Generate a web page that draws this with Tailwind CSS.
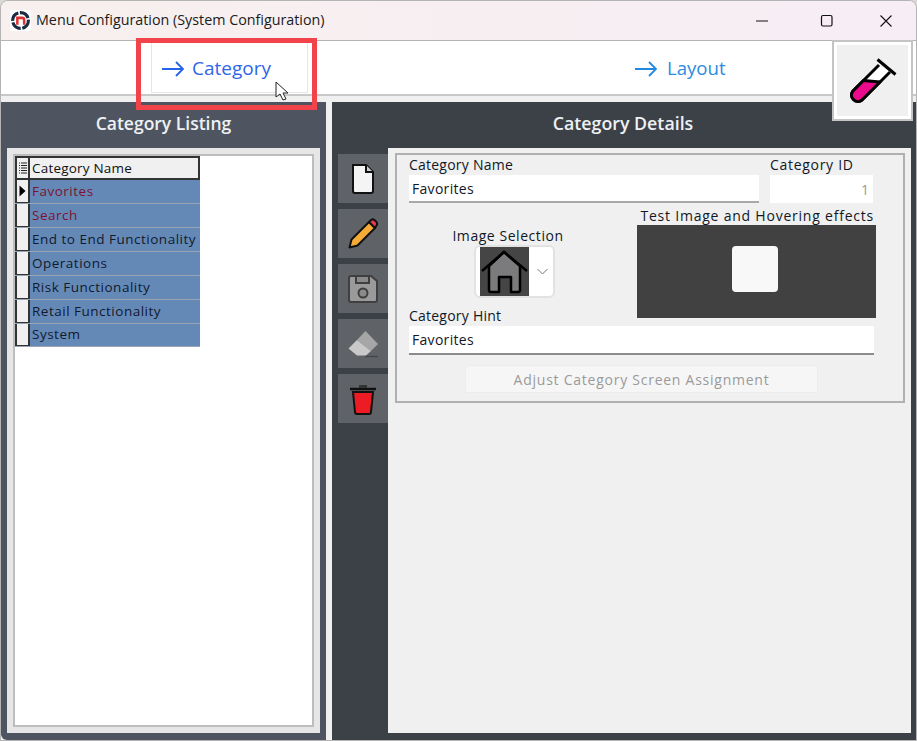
<!DOCTYPE html>
<html lang="en">
<head>
  <meta charset="UTF-8" />
  <title>Menu Configuration</title>
  <script src="https://cdn.jsdelivr.net/npm/@tailwindcss/browser@4"></script>
</head>
<body class="bg-[#d9d9d9]">
  <div class="relative w-[917px] h-[741px] overflow-hidden flex flex-col bg-[#f0f0f0] rounded-t-[8px] border border-[#b4b4b4] font-['Open_Sans',sans-serif] box-border">

    <!-- title bar -->
    <header class="h-[40px] shrink-0 flex items-center bg-gradient-to-r from-[#f7f0ee] to-[#f7edf5] border-b border-[#b4b4b4]">
      <svg class="ml-[9px] w-[21px] h-[21px] bg-white" viewBox="0 0 20 20">
        <circle cx="10" cy="10" r="7.5" fill="none" stroke="#1c2b44" stroke-width="3" stroke-dasharray="10 1.5" />
        <path d="M7 14V7.500h4.500a2 2 0 0 1 2 2V14" fill="none" stroke="#e0312e" stroke-width="2.400" />
      </svg>
      <span class="ml-[5px] text-[14.3px] leading-none text-[#1a1a1a]">Menu Configuration (System Configuration)</span>
      <div class="ml-auto flex items-center">
        <svg class="w-[14px] h-[14px] mr-[51px]" viewBox="0 0 14 14"><path d="M1 7h12" stroke="#111" stroke-width="1" /></svg>
        <svg class="w-[14px] h-[14px] mr-[45px]" viewBox="0 0 14 14"><rect x="1.500" y="1.500" width="10.500" height="10.500" rx="1.500" fill="none" stroke="#111" stroke-width="1.200" /></svg>
        <svg class="w-[14px] h-[14px] mr-[23px]" viewBox="0 0 14 14"><path d="M1.500 1.500l11 11M12.500 1.500l-11 11" stroke="#111" stroke-width="1.100" /></svg>
      </div>
    </header>

    <!-- tab row -->
    <nav class="h-[55px] shrink-0 flex bg-white border-b-2 border-[#c8c8c8]">
      <div class="ml-[150px] w-[157px] h-[52px] flex items-center border-l border-r border-b border-[#e6e6e6] pl-[9px] pt-[4px] gap-[7px]">
        <svg class="w-[24px] h-[16px]" viewBox="0 0 24 16"><path d="M1 8h21M15 1l7 7-7 7" fill="none" stroke="#2463eb" stroke-width="1.800" /></svg>
        <span class="text-[19px] leading-none text-[#2f66e8]">Category</span>
      </div>
      <div class="ml-[326px] h-[52px] flex items-center pt-[3px] gap-[9px]">
        <svg class="w-[24px] h-[16px]" viewBox="0 0 24 16"><path d="M1 8h21M15 1l7 7-7 7" fill="none" stroke="#2189e0" stroke-width="1.800" /></svg>
        <span class="text-[18.6px] leading-none text-[#2b8ce0]">Layout</span>
      </div>
    </nav>

    <!-- panels -->
    <main class="flex-1 flex gap-[6px] pt-[6px] min-h-0">
      <section class="w-[325px] shrink-0 flex flex-col bg-[#4e5560] rounded-bl-[6px] pb-[7px]">
        <h2 class="h-[46px] shrink-0 pb-[3px] flex items-center justify-center text-[17.5px] font-semibold text-[#eef1f4]">Category Listing</h2>
        <div class="flex-1 mx-[6px] bg-[#e6e6e6] p-[6px] min-h-0">
          <div class="h-full bg-white border-2 border-[#bdbdbd] text-[13.5px] tracking-[0.5px] text-[#111]">
            <div class="w-[185px]">
              <div class="flex h-[24px] bg-[#f0f0f0] border-2 border-[#333]">
                <div class="w-[13px] border-r-2 border-[#333] flex items-center justify-center">
                  <svg class="w-[9px] h-[12px]" viewBox="0 0 9 12"><path d="M3 1h6M1 1h1M3 3.500h6M1 3.500h1M3 6h6M1 6h1M3 8.500h6M1 8.500h1M3 11h6M1 11h1" stroke="#222" /></svg>
                </div>
                <span class="pl-[2px] leading-[20px] tracking-[0.2px]">Category Name</span>
              </div>
              <div class="flex h-[24px] bg-[#6589b7] border-b border-[#98a4b4]">
                <div class="w-[15px] bg-[#f0f0f0] border-l-2 border-r-2 border-b border-[#333] flex items-center justify-center">
                  <svg class="w-[7px] h-[12px]" viewBox="0 0 7 12"><path d="M0.500 0.500L6.500 6 0.500 11.500z" fill="#000" /></svg>
                </div>
                <span class="pl-[2px] leading-[23px] text-[#7d1230]">Favorites</span>
              </div>
              <div class="flex h-[24px] bg-[#6589b7] border-b border-[#98a4b4]">
                <div class="w-[15px] bg-[#f0f0f0] border-l-2 border-r-2 border-b border-[#333]"></div>
                <span class="pl-[2px] leading-[23px] text-[#7d1230]">Search</span>
              </div>
              <div class="flex h-[24px] bg-[#6589b7] border-b border-[#98a4b4]">
                <div class="w-[15px] bg-[#f0f0f0] border-l-2 border-r-2 border-b border-[#333]"></div>
                <span class="pl-[2px] leading-[23px] text-[#101a2e] whitespace-nowrap">End to End Functionality</span>
              </div>
              <div class="flex h-[24px] bg-[#6589b7] border-b border-[#98a4b4]">
                <div class="w-[15px] bg-[#f0f0f0] border-l-2 border-r-2 border-b border-[#333]"></div>
                <span class="pl-[2px] leading-[23px] text-[#101a2e]">Operations</span>
              </div>
              <div class="flex h-[24px] bg-[#6589b7] border-b border-[#98a4b4]">
                <div class="w-[15px] bg-[#f0f0f0] border-l-2 border-r-2 border-b border-[#333]"></div>
                <span class="pl-[2px] leading-[23px] text-[#101a2e]">Risk Functionality</span>
              </div>
              <div class="flex h-[24px] bg-[#6589b7] border-b border-[#98a4b4]">
                <div class="w-[15px] bg-[#f0f0f0] border-l-2 border-r-2 border-b border-[#333]"></div>
                <span class="pl-[2px] leading-[23px] text-[#101a2e]">Retail Functionality</span>
              </div>
              <div class="flex h-[23px] bg-[#6589b7] border-b border-[#98a4b4]">
                <div class="w-[15px] bg-[#f0f0f0] border-l-2 border-r-2 border-b border-[#333]"></div>
                <span class="pl-[2px] leading-[21px] text-[#101a2e]">System</span>
              </div>
            </div>
          </div>
        </div>
      </section>

      <section class="flex-1 min-w-0 flex flex-col bg-[#3c4047] pr-[5px] pb-[7px]">
        <h2 class="h-[46px] shrink-0 pl-[3px] pb-[3px] flex items-center justify-center text-[17.8px] font-semibold text-[#eef1f4]">Category Details</h2>
        <div class="flex-1 flex min-h-0">
          <div class="w-[56px] shrink-0 pl-[6px] pt-[6px] flex flex-col gap-[6px]">
            <button class="w-[50px] h-[49px] bg-[#5f6266] flex items-center justify-center">
              <svg class="w-[26px] h-[32px]" viewBox="0 0 26 32"><path d="M3 2h13l7 7v19a2 2 0 0 1-2 2H5a2 2 0 0 1-2-2z" fill="#f4f4f4" stroke="#111" stroke-width="2" /><path d="M16 2v7h7" fill="#cfcfcf" stroke="#111" stroke-width="2" /></svg>
            </button>
            <button class="w-[50px] h-[49px] bg-[#5f6266] flex items-center justify-center">
              <svg class="w-[32px] h-[32px]" viewBox="0 0 32 32"><path d="M2.500 29.500l2-8L22 4l6 6L10.500 27.500z" fill="#f5ab35" stroke="#111" stroke-width="2" stroke-linejoin="round" /><path d="M22 4l2-2a3 3 0 0 1 3.500 0l2 2a3 3 0 0 1 0 3.500l-1.500 2.500z" fill="#e8384f" stroke="#111" stroke-width="2" stroke-linejoin="round" /></svg>
            </button>
            <button class="w-[50px] h-[49px] bg-[#5f6266] flex items-center justify-center">
              <svg class="w-[32px] h-[32px]" viewBox="0 0 32 32"><path d="M2 5a2 2 0 0 1 2-2h20l6 5v19a2 2 0 0 1-2 2H4a2 2 0 0 1-2-2z" fill="#9a9a9a" stroke="#3f3f3f" stroke-width="2" /><path d="M9 3h13v7H9z" fill="#8a8a8a" stroke="#3f3f3f" stroke-width="2" /><circle cx="16" cy="20" r="4.500" fill="#8a8a8a" stroke="#3f3f3f" stroke-width="2" /></svg>
            </button>
            <button class="w-[50px] h-[49px] bg-[#5f6266] flex items-center justify-center">
              <svg class="w-[32px] h-[30px]" viewBox="0 0 32 30"><path d="M10 11L18.500 2 31 15 24 22z" fill="#a6a6a6" /><path d="M1.500 19.500L10 11l14 11-5 4.500h-9z" fill="#c9c9c9" /><path d="M18 27.500h13" stroke="#444" stroke-width="1.200" /></svg>
            </button>
            <button class="w-[50px] h-[49px] bg-[#5f6266] flex items-center justify-center">
              <svg class="w-[28px] h-[32px]" viewBox="0 0 28 32"><path d="M1 6h26" stroke="#111" stroke-width="2.500" /><path d="M10 5V2h8v3" fill="#333" /><path d="M4 9h20l-2 20a2 2 0 0 1-2 2H8a2 2 0 0 1-2-2z" fill="#ed1c24" stroke="#111" stroke-width="2" /></svg>
            </button>
          </div>

          <div class="flex-1 min-w-0 bg-[#f0f0f0] pl-[7px] pr-[6px] pt-[5px] text-[14px] text-[#111827]">
            <div class="h-[250px] border-2 border-[#b0b0b0] pl-[12px] pr-[29px] flex flex-col">
              <div class="flex gap-[11px]">
                <div class="w-[350px]">
                  <label class="block leading-[20px] tracking-[0.23px]">Category Name</label>
                  <input value="Favorites" readonly class="w-full h-[28px] px-[3px] bg-white border-b-2 border-[#a8a8a8] text-[14px] tracking-[0.3px] text-[#111827] outline-none" />
                </div>
                <div class="w-[103px]">
                  <label class="block leading-[20px] whitespace-nowrap tracking-[0.7px]">Category ID</label>
                  <input value="1" readonly class="w-full h-[28px] px-[4px] bg-white text-right text-[14px] text-[#999] outline-none" />
                </div>
              </div>
              <div class="flex h-[116px]">
                <div class="w-[228px] flex flex-col items-center pt-[24px]">
                  <label class="leading-[18px] ml-[-30px] tracking-[0.55px]">Image Selection</label>
                  <div class="ml-[-18px] w-[81px] h-[53px] flex items-center bg-white border-2 border-[#e2e2e2] rounded-[6px] pl-[4px]">
                    <div class="w-[49px] h-[49px] shrink-0 bg-[#454545]">
                      <svg class="w-[49px] h-[49px]" viewBox="0 0 49 49"><path d="M9 19L24 5l16 14v24a2 2 0 0 1-2 2H31V30H19v15H11a2 2 0 0 1-2-2z" fill="#7b7b7d" stroke="#000" stroke-width="2.500" stroke-linejoin="round" /><path d="M2 24L24 5l23 19" fill="none" stroke="#000" stroke-width="2.500" /></svg>
                    </div>
                    <svg class="ml-[8px] w-[11px] h-[7px]" viewBox="0 0 11 7"><path d="M0.500 1L5.500 6l5-5" fill="none" stroke="#777" stroke-width="1" /></svg>
                  </div>
                </div>
                <div class="flex-1 flex flex-col pt-[4px]">
                  <label class="block leading-[18px] text-right whitespace-nowrap tracking-[0.78px]">Test Image and Hovering effects</label>
                  <div class="mr-[-2px] h-[93px] bg-[#414141] flex items-center justify-center pb-[5px]">
                    <div class="w-[46px] h-[46px] mr-[3px] bg-[#f8f8f8] rounded-[4px]"></div>
                  </div>
                </div>
              </div>
              <label class="block leading-[19px] mt-[-13px] tracking-[0.23px]">Category Hint</label>
              <input value="Favorites" readonly class="mt-[1px] w-[465px] h-[29px] px-[3px] bg-white border-b-2 border-[#8c8c8c] text-[14px] tracking-[0.3px] text-[#111827] outline-none" />
              <button disabled class="mt-[10px] ml-[56px] w-[353px] h-[28px] bg-[#f6f6f6] border border-[#ececec] rounded-[3px] text-[#9a9a9a] tracking-[0.75px]">Adjust Category Screen Assignment</button>
            </div>
          </div>
        </div>
      </section>
    </main>

    <!-- test tube button, hangs over the tab row and the details header -->
    <button class="absolute left-[831px] top-[39px] w-[81px] h-[81px] bg-white border-2 border-[#c4c4c4] p-[3px]">
      <span class="w-full h-full bg-[#f0f0f0] flex items-center justify-center">
        <svg class="w-[48px] h-[48px]" viewBox="0 0 48 48">
          <path d="M30 8L4 34A6.400 6.400 0 0 0 13 43L41 15" fill="#fff" stroke="#000" stroke-width="3" />
          <path d="M14.500 23.500L31 25 13 43A6.400 6.400 0 0 1 4 34z" fill="#ec0a8c" stroke="#000" stroke-width="3" stroke-linejoin="round" />
          <path d="M28.500 2.500l18 15" stroke="#000" stroke-width="3" />
        </svg>
      </span>
    </button>

    <!-- annotation and pointer -->
    <div class="absolute left-[135px] top-[37px] w-[181px] h-[72px] border-[5px] border-[#f2434a]"></div>
    <svg class="absolute left-[274px] top-[80px] w-[14px] h-[21px]" viewBox="0 0 14 21"><path d="M1 1v15l4-3 3 6 3-1-3-6h5z" fill="#fff" stroke="#222" stroke-width="1" stroke-linejoin="round" /></svg>
  </div>
</body>
</html>
